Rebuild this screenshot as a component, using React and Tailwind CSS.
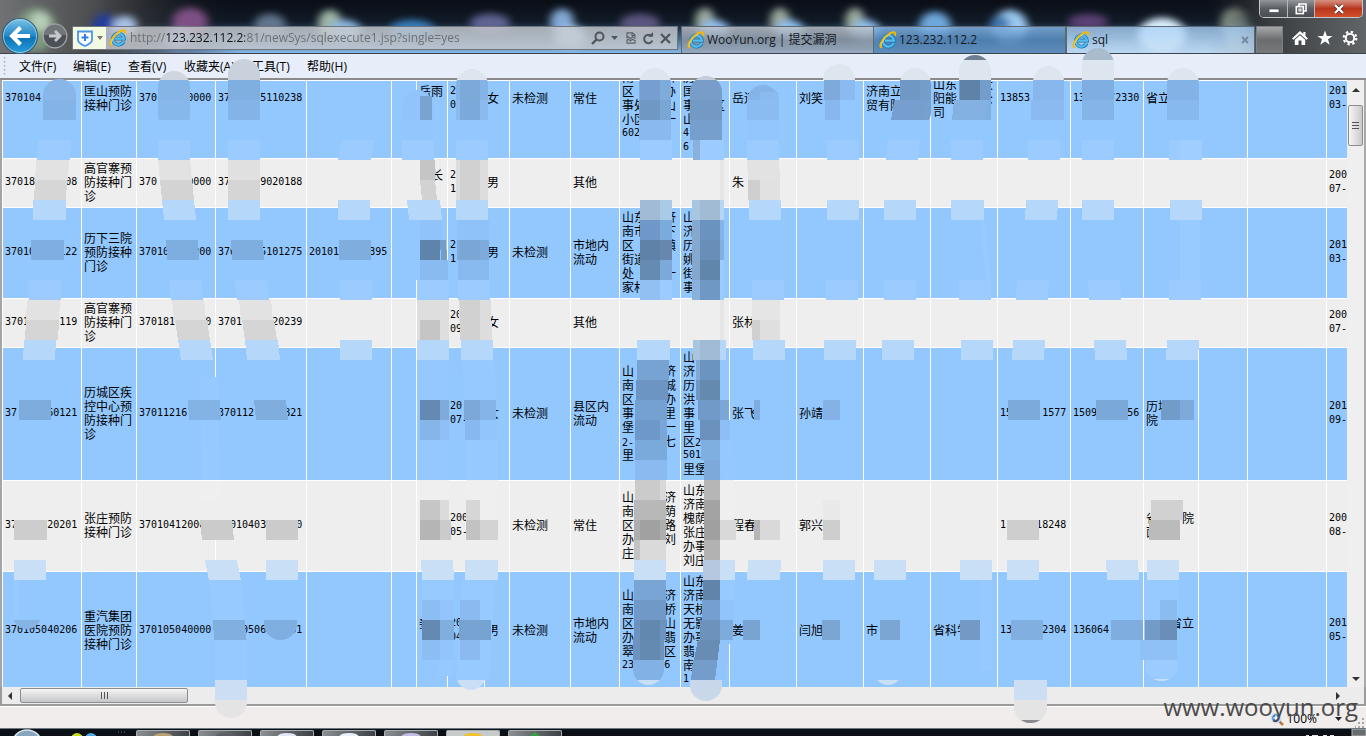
import React from 'react';

const COLS = [
  'w-[79px]', 'w-[55px]', 'w-[79px]', 'w-[91px]', 'w-[85px]', 'w-[25px]', 'w-[31px]', 'w-[37px]',
  'w-[25px]', 'w-[61px]', 'w-[49px]', 'w-[61px]', 'w-[49px]', 'w-[67px]', 'w-[67px]', 'w-[67px]',
  'w-[67px]', 'w-[73px]', 'w-[73px]', 'w-[55px]', 'w-[49px]', 'w-[79px]', 'w-[79px]',
];

// One entry per column; "|" separates the lines of a cell.
const ROWS = [
  ['370104', '匡山预防|接种门诊', '370     0000', '37     5110238', '', '', '岳雨|　', '2|0', '女', '未检测', '常住',
    '　|南　　 济|区　　 办|事处　 山|小区　 一|602', '　|　|历|国|事　 区|山|4|6', '岳连', '刘笑', '济南立|贸有限', '山东　　大|阳能　　公|司', '13853', '13    72330', '省立', '', '', '201|03-'],
  ['37018     08', '高官寨预|防接种门|诊', '370     0000', '37     9020188', '', '', '　长|　', '2|1', '男', '', '其他',
    '', '', '朱', '', '', '', '', '', '', '', '', '200|07-'],
  ['37010    122', '历下三院|预防接种|门诊', '37010    200', '370    5101275', '20101     395', '', '', '2|1', '男', '未检测', '市地内|流动',
    '山东　 济|南市　 下|区　　 镇|街道|处　　 一|家村', '山|济|历|姚|街|事', '', '', '', '', '', '', '', '', '', '201|03-'],
  ['3701     119', '高官寨预|防接种门|诊', '370181     0', '3701     20239', '', '', '', '20|09', '女', '', '其他',
    '', '', '张林', '', '', '', '', '', '', '', '', '200|07-'],
  ['37     60121', '历城区疾|控中心预|防接种门|诊', '37011216', '370112     821', '', '', '', '20|07-', '女', '未检测', '县区内|流动',
    '山　　 济|南　　 城|区　　 办|事　　 里|堡　　 一|2-　　 七|里', '山|济|历|洪|事|里|区2|501|里堡', '张飞', '孙靖', '', '', '15     1577', '1509     56', '历城|院', '', '', '201|09-'],
  ['37     20201', '张庄预防|接种门诊', '37010412000', '  010403     0', '', '', '', '200|05-', '', '未检测', '常住',
    '山　　 济|南　　 荫|区　　 路|办　　 刘|庄', '山东|济南|槐荫|张庄|办事|刘庄', '程春', '郭兴', '', '', '1     18248', '', '省　　院|面', '', '', '200|08-'],
  ['370105040206', '重汽集团|医院预防|接种门诊', '370105040000', '    0506    51', '', '', '姜|　', '20|04', '男', '未检测', '市地内|流动',
    '山　　 济|南　　 桥|区　　 山|办　　 翡|翠　　 区|23     6', '山东|济南|天桥|无影|办事|翡|南|1', '姜', '闫旭', '市', '省科学', '13     2304', '136064', '　　省立|　', '', '', '201|05-'],
];

const L = '#9bcbff';
const M = '#b5d7fa';
const N = '#c8dff5';
const B = '#93c8ff';
const G = '#eeeeee';

// Strokes with rounded ends: box, then colour bands [y, height, colour].
const CAPS = [
  [[43, 79, 33, 60], [[79, 21, '#88b6e8'], [100, 20, '#84b3e7']]],
  [[158, 71, 32, 60], [[71, 9, '#d0d6dd'], [80, 20, '#85b4e6'], [100, 20, '#87b8ec']]],
  [[228, 59, 32, 80], [[59, 21, '#c9d2dc'], [80, 20, '#7fafe1'], [100, 20, '#84b4e7']]],
  [[402, 90, 31, 80], [[90, 50, '#90c4fb']]],
  [[456, 69, 32, 110], [[69, 11, '#dde5ee'], [80, 20, '#84b3e5'], [100, 20, '#8abaee'], [120, 20, '#94c7fd']]],
  [[639, 68, 32, 100], [[68, 12, '#dde5ee'], [80, 20, '#7dabdc'], [100, 20, '#7aa6d6'], [120, 20, '#8ab9ef']]],
  [[690, 76, 32, 90], [[76, 4, '#c5ced8'], [80, 20, '#779dc8'], [100, 20, '#739ac5'], [120, 20, '#769fcd']]],
  [[747, 85, 32, 80], [[85, 15, '#84b4e8'], [100, 20, '#8abcf1'], [120, 20, '#92c6fd']]],
  [[823, 64, 32, 60], [[64, 16, '#dde5ee']]],
  [[900, 68, 31, 60], [[68, 12, '#dde5ee'], [80, 20, '#759dcc'], [100, 20, '#799fce']]],
  [[959, 55, 32, 80], [[55, 5, '#6e7f92'], [60, 20, '#dde5ee'], [80, 20, '#759dcc'], [100, 20, '#80b0e0']]],
  [[1033, 66, 31, 70], [[66, 14, '#dde5ee'], [80, 20, '#87b7ec'], [100, 20, '#8abaf0']]],
  [[1082, 48, 32, 90], [[48, 12, '#a9bccb'], [60, 20, '#dde5ee'], [80, 20, '#7fafe2'], [100, 20, '#84b4e8']]],
  [[1167, 68, 32, 90], [[68, 12, '#dde5ee'], [80, 20, '#82b2e6'], [100, 20, '#88b9ee']]],
  [[12, 590, 30, 39], [[620, 9, '#85b3e3']]],
  [[215, 640, 32, 78], [[640, 40, B], [680, 20, '#cbdef4'], [700, 18, '#e4e4e4']]],
  [[264, 590, 33, 50], [[620, 20, '#7fafe0']]],
  [[456, 630, 30, 60], [[660, 20, B], [680, 10, N]]],
  [[633, 600, 31, 85], [[640, 20, '#6f98c6'], [660, 20, '#81b1e5'], [680, 5, N]]],
  [[690, 630, 32, 71], [[680, 21, '#c8d8ea']]],
  [[1014, 640, 33, 83], [[680, 20, '#cbdef4'], [700, 20, '#e4e4e4'], [720, 3, '#8a8a8e']]],
  [[1145, 600, 33, 81], [[660, 20, L], [679, 2, N]]],
  [[873, 630, 30, 55], [[680, 5, N]]],
];

// Blocks: [x, y, width, colour, height = 20, shift of the lower edge = 0]
const BLOCKS = [
  [38, 140, 33, L, 20, -1], [36, 160, 33, '#e2e2e2', 20, -1], [35, 180, 32, '#d6d6d6', 20, -1], [33, 200, 33, M],
  [31, 240, 33, '#7fafe2'], [29, 280, 32, L], [27, 300, 33, '#e2e2e2', 20, -1], [26, 320, 33, '#d5d5d5', 20, -1],
  [24, 340, 32, M, 20, -1], [19, 400, 32, '#7eacdd'], [14, 520, 33, '#cdcdcd'], [14, 560, 32, N], [14, 580, 5, '#97c9fc', 40, -1],

  [158, 120, 32, B], [158, 140, 32, L], [158, 160, 32, '#e2e2e2', 20, 2], [160, 180, 32, '#d3d3d3', 20, 2], [162, 200, 32, M, 20, 2],
  [166, 240, 32, '#7eaddf', 20, 1], [169, 280, 32, L, 20, 2], [172, 300, 32, '#e2e2e2', 20, 2], [175, 320, 32, '#d5d5d5', 20, 3],
  [178, 340, 32, M, 20, 3], [200, 377, 18, '#95c9ff', 103, 2], [188, 400, 32, '#83b2e5', 20, 1], [200, 481, 20, '#efefef'],
  [200, 500, 22, G], [200, 520, 32, '#cbcbcb', 20, 2], [205, 560, 32, N, 20, 4], [209, 580, 32, '#97cafe', 40, 4], [213, 620, 32, '#80afe0', 20, 1], [215, 640, 32, '#95c9ff', 40],

  [228, 120, 32, B], [228, 140, 32, L], [228, 160, 32, '#e0e0e0'], [228, 180, 32, '#d5d5d5'], [228, 200, 32, M], [231, 240, 32, '#7eaddf', 20, 1],
  [235, 280, 32, L, 20, 2], [239, 300, 32, '#e2e2e2', 20, 2], [242, 320, 32, '#d5d5d5', 20, 3], [245, 340, 33, M, 20, 2],
  [254, 400, 32, '#7faddd', 20, 2], [266, 520, 32, '#cbcbcb'], [266, 560, 32, N],

  [341, 140, 33, L, 20, -3], [338, 200, 32, M], [339, 240, 32, '#7fadde'], [340, 280, 32, L], [340, 340, 32, M],

  [402, 120, 32, '#92c6fd'], [420, 96, 12, '#79a3d0', 24], [402, 140, 32, L], [408, 160, 12, G, 40], [420, 160, 15, '#c5c5c5'], [420, 180, 15, '#d2d2d2', 20, 2],
  [407, 200, 33, M, 20, 2], [410, 220, 33, '#93c7ff', 60, 5], [420, 220, 22, '#90c3fa'], [420, 240, 20, '#5f84ab'], [440, 240, 6, '#759dca', 20, 1],
  [420, 260, 28, '#8abbf0'], [417, 280, 32, L], [417, 300, 32, '#dedede'], [417, 320, 32, '#dedede'], [420, 320, 20, '#c5c5c5'], [417, 340, 32, M],
  [417, 360, 32, '#94c8fe', 40], [420, 400, 20, '#6489b2'], [440, 400, 9, '#7eabd9'], [420, 420, 20, '#85b5e9'], [440, 420, 9, '#8ebff7'],
  [417, 440, 32, '#94c8fe', 40], [417, 480, 32, '#efefef'], [420, 500, 20, '#c6c6c6'], [440, 500, 9, '#dbdbdb'], [420, 520, 20, '#b5b5b5'], [440, 520, 11, '#cbcbcb'],
  [422, 540, 30, G], [421, 560, 32, N, 20, 1], [422, 580, 32, '#97cafe'], [422, 600, 18, '#8cbef4'], [440, 600, 14, '#91c5fb'],
  [422, 620, 18, '#6489b2'], [440, 620, 14, '#80aedd'], [422, 640, 18, '#8cbef4'], [440, 640, 14, '#91c5fb'], [440, 660, 14, '#96c9ff', 16, -3],

  [460, 80, 20, '#7da9d8'], [460, 100, 20, '#7ca9db'], [456, 140, 32, L], [456, 160, 32, '#dddddd', 40], [460, 160, 20, '#d1d1d1', 40],
  [456, 200, 32, M], [457, 220, 32, '#8fc2f8'], [457, 240, 32, '#7eabdc'], [460, 240, 20, '#7aa6d6'], [458, 260, 31, '#89baef'], [458, 280, 32, L],
  [459, 300, 32, '#dddddd', 40, 1], [460, 300, 20, '#d1d1d1', 40], [461, 340, 32, M], [462, 360, 32, '#95c9ff', 40, 3], [464, 400, 32, '#85b4e8'], [464, 400, 16, '#7ba8d9'],
  [465, 420, 32, '#91c5fc'], [465, 420, 15, '#87b8ef'], [466, 440, 32, '#95c9ff', 40], [466, 480, 32, '#efefef', 40], [466, 500, 14, '#d6d6d6'],
  [466, 520, 14, '#c2c2c2'], [480, 520, 18, '#d3d3d3'], [466, 540, 32, G], [465, 560, 33, N], [462, 580, 33, '#97cafe', 100, -6], [460, 600, 20, '#8abaf0'],
  [459, 620, 32, '#76a3d2'], [460, 640, 20, '#8abaf0'],

  [640, 80, 20, '#769fcf'], [640, 100, 20, '#7098c5'], [640, 140, 32, L], [640, 200, 20, '#a1bad5'], [660, 200, 12, '#aacbe8'],
  [640, 220, 20, '#6f98c8'], [660, 220, 12, '#7baadd'], [640, 240, 20, '#5f82a8'], [660, 240, 12, '#6787ae'], [640, 260, 20, '#668bb3'], [660, 260, 12, '#7ba9da'],
  [640, 280, 20, '#93c0f2'], [660, 280, 12, L], [637, 340, 33, M], [637, 360, 32, '#77a3d2'], [636, 380, 32, '#6d95c3'], [635, 400, 32, '#74a1d2'],
  [635, 420, 25, '#6e98c7'], [660, 420, 7, '#79a7d9'], [635, 440, 32, '#7aaadb'], [635, 460, 32, '#8abaf0'], [635, 480, 25, '#cbcbcb'], [660, 480, 6, '#d8d8d8'],
  [634, 500, 32, '#b8b8b8'], [634, 520, 32, '#aeaeae'], [640, 520, 20, '#a1a1a1'], [634, 540, 32, '#dadada'], [634, 540, 6, '#c3c3c3'], [634, 560, 32, N],
  [634, 580, 32, '#79a5d4'], [634, 600, 32, '#7199c8'], [634, 620, 32, '#6c92bd'], [640, 620, 20, '#6388b0'], [633, 640, 31, '#6d93be'], [640, 640, 20, '#658ab2'],

  [693, 140, 7, '#8ab0dc'], [700, 140, 24, L], [692, 200, 8, '#a9c6e1'], [700, 200, 20, '#a2bbd4'], [720, 200, 4, '#b4d5f3'],
  [692, 220, 8, '#85a8cf'], [700, 220, 20, '#6b93c0'], [720, 220, 4, '#85b5e8'], [692, 240, 8, '#85a8cf'], [700, 240, 20, '#698fb9'], [720, 240, 4, '#83aee0'],
  [692, 260, 8, '#83a7cd'], [700, 260, 20, '#6086ac'], [720, 260, 4, '#9bcbff'], [692, 280, 8, '#8ab0dc'], [700, 280, 20, '#7098c4'], [720, 280, 4, L],
  [720, 160, 4, '#e6e6e6', 40], [720, 300, 4, '#e6e6e6', 40], [693, 340, 7, '#a9c6e1'], [700, 340, 20, '#a2bbd4'], [720, 340, 6, M],
  [696, 360, 4, '#83a9d5'], [700, 360, 20, '#6c94c0'], [696, 380, 4, '#7198c4'], [700, 380, 20, '#658aaf'], [698, 400, 22, '#729ac9'], [720, 400, 9, '#7aa7d7'],
  [720, 420, 10, '#8dbff6'], [700, 420, 20, '#6b91bd'], [701, 440, 19, '#7fafe0'], [704, 460, 16, '#7ca9da'], [720, 440, 12, '#94c8ff', 40, 3],
  [704, 480, 16, '#b6b6b6'], [704, 500, 16, '#a3a3a3'], [704, 520, 16, '#a0a0a0'], [720, 480, 14, '#efefef', 40], [720, 520, 16, '#d9d9d9'], [704, 540, 16, '#b2b2b2'], [720, 540, 15, G],
  [703, 560, 17, '#b5c8e0'], [720, 560, 15, N], [703, 580, 17, '#6084aa'], [720, 580, 15, '#97cafe'], [702, 600, 18, '#759fcf'], [720, 600, 14, '#90c4fb'],
  [700, 620, 20, '#6d93bc'], [720, 620, 13, '#7dacdc'], [698, 640, 22, '#678db4', 20, -4], [698, 640, 22, '#678db4'], [693, 660, 27, '#749dcc', 20, -2], [693, 660, 27, '#749dcc'], [720, 640, 10, '#91c4fb', 40, -5],

  [760, 92, 18, '#8abbf0', 8], [747, 140, 32, L], [747, 160, 32, '#e2e2e2', 20, 1], [748, 180, 12, '#cfcfcf'], [760, 180, 20, '#e1e1e1'], [749, 200, 32, M],
  [752, 280, 32, L], [752, 300, 28, '#e5e5e5'], [752, 320, 8, '#d0d0d0'], [760, 320, 20, '#dfdfdf'], [753, 340, 32, M], [754, 400, 6, '#7eacdf'],
  [754, 520, 6, '#b5b5b5'], [760, 520, 20, '#d9d9d9'], [748, 560, 33, N, 20, -1], [743, 620, 17, '#79a4d2'],

  [824, 80, 16, '#7eaadb'], [840, 80, 15, '#8abaf0'], [825, 100, 15, '#87b7ec'], [827, 140, 32, L], [827, 200, 32, M], [826, 280, 32, L], [824, 340, 32, M],
  [823, 400, 17, '#84b2e7'], [823, 500, 17, '#e9e9e9'], [823, 520, 17, '#cecece'], [823, 560, 32, N], [822, 620, 18, '#7ba6d4'],

  [895, 100, 32, '#769fd0', 20, -4], [900, 80, 20, '#7098c5'], [888, 140, 32, L, 20, -2], [884, 200, 32, M], [884, 280, 32, L], [882, 340, 32, M], [874, 560, 32, N], [880, 620, 20, '#7ba6d4'],
  [960, 80, 20, '#5f82a8'], [954, 100, 33, '#83b1e2', 20, -2], [951, 140, 32, L], [951, 200, 33, M], [980, 220, 5, '#97caff', 60, 6], [959, 280, 32, L], [961, 340, 32, M],
  [960, 560, 32, N], [960, 620, 20, '#739ac5'], [980, 580, 12, '#96c9ff', 90],
  [1031, 100, 31, '#8abaf0'], [1028, 140, 32, L], [1026, 200, 32, M, 20, -1], [1017, 280, 32, L, 20, -1], [1013, 340, 32, M, 20, -1], [1008, 400, 32, '#7caada'], [1007, 520, 32, '#cecece'], [1007, 560, 32, N], [1011, 620, 32, '#80afe0'],
  [1082, 140, 32, L], [1082, 200, 32, M], [1088, 280, 32, L, 20, 1], [1094, 340, 32, M, 20, 1], [1096, 400, 32, '#7aa8d8'], [1106, 560, 32, N, 20, 1], [1111, 620, 32, '#7faddf'],
  [1169, 120, 32, B], [1169, 140, 32, L], [1180, 140, 22, '#a0ceff'], [1198, 160, 3, G, 40], [1170, 200, 32, M], [1180, 220, 20, '#98cbff', 60], [1169, 280, 32, L],
  [1198, 300, 3, G, 40], [1167, 340, 32, M, 20, -1], [1162, 400, 32, '#719bc9', 20, -1], [1180, 400, 14, '#7daada'], [1151, 500, 32, '#d1d1d1'], [1149, 520, 31, '#bbbbbb'],
  [1147, 560, 32, N], [1144, 580, 34, '#97cafe', 40], [1160, 600, 17, '#8bbcf0'], [1145, 620, 15, '#729bc8'], [1160, 620, 17, '#698fb9'], [1140, 640, 37, '#8fc1f6'],
];

function Cover() {
  return (
    <svg aria-hidden="true" shapeRendering="crispEdges" className="pointer-events-none absolute left-0 top-0 z-10 h-[736px] w-[1366px]" viewBox="0 0 1366 736">
      {CAPS.map(([[x, y, w, h], bands], i) => (
        <g key={i} clipPath={`url(#cap${i})`}>
          <clipPath id={`cap${i}`}><rect x={x} y={y} width={w} height={h} rx="16" /></clipPath>
          {bands.map(([by, bh, c]) => <rect key={by} x={x - 4} y={by} width={w + 8} height={bh} fill={c} />)}
        </g>
      ))}
      {BLOCKS.map(([x, y, w, c, h = 20, d = 0], i) => (
        <path key={i} d={`M${x} ${y}h${w}l${d} ${h}h${-w}z`} fill={c} />
      ))}
    </svg>
  );
}

function Line({ text }) {
  const parts = text.split(/([\x20-\x7e]+)/).filter(Boolean);
  const latin = /^[\x20-\x7e]+$/.test(text);
  return (
    <div className={`h-[14px] whitespace-pre ${latin ? "font-['DejaVu_Sans_Mono',monospace] text-[10px] leading-[13px]" : 'leading-[14px]'}`}>
      {latin ? text : parts.map((p, i) => /^[\x20-\x7e]/.test(p)
        ? <span key={i} className="font-['DejaVu_Sans_Mono',monospace] text-[10px]">{p}</span>
        : p)}
    </div>
  );
}

function IeIcon() {
  return (
    <svg viewBox="0 0 18 18" className="size-[18px] shrink-0" aria-hidden="true">
      <path d="M14.6 12.2A5.6 5.6 0 1 1 15 9.6H6" fill="none" stroke="#1b78b8" strokeWidth="3.6" />
      <path d="M14.6 12.2A5.6 5.6 0 1 1 15 9.6H6" fill="none" stroke="#55bdec" strokeWidth="2.2" />
      <path d="M2.2 16.3C-.6 14 5.2 5.2 11.5 2.2c4-1.9 5.3-.7 4.6 1.8" fill="none" stroke="#f5b800" strokeWidth="1.9" strokeLinecap="round" />
      <path d="M2.5 15.2C1.4 12.6 6 6 11.6 3" fill="none" stroke="#ffe36a" strokeWidth=".6" />
    </svg>
  );
}

const GLOWS = [
  [36, 30, 20, 22, '#7f9a80'], [40, 22, 10, 10, '#b8cfb8'], [105, 28, 13, 14, '#243c9c'], [125, 26, 12, 10, '#a9c2e6'], [190, 22, 18, 14, '#7d4f84'],
  [178, 40, 14, 10, '#7f93c4'], [270, 26, 16, 12, '#60758c'], [330, 24, 12, 14, '#9fb6a6'], [345, 32, 16, 12, '#8cb8e2'], [412, 30, 22, 10, '#397fbb'],
  [490, 24, 20, 10, '#5e6493'], [562, 22, 12, 13, '#82a8d4'], [570, 38, 16, 12, '#9dc7ec'], [640, 24, 20, 10, '#5b557f'], [705, 22, 10, 14, '#9aa99c'],
  [715, 32, 14, 12, '#8fc0ee'], [780, 22, 10, 14, '#9aa99c'], [790, 32, 14, 12, '#8fc0ee'], [855, 22, 10, 14, '#9aa99c'], [866, 32, 14, 12, '#8fc0ee'],
  [935, 26, 16, 14, '#6ea7dc'], [1010, 28, 18, 18, '#9ccaf2'], [1000, 24, 10, 8, '#3e76ad'], [1088, 22, 20, 8, '#5b4173'], [1162, 36, 24, 18, '#dcf0ff'], [1235, 24, 14, 16, '#a3b3a0'], [1242, 40, 16, 16, '#badbf2'],
];

function Glass() {
  return (
    <svg aria-hidden="true" className="absolute inset-0 h-full w-full" viewBox="0 0 1366 54" preserveAspectRatio="none">
      <defs>
        <linearGradient id="sky" x1="0" y1="0" x2="0" y2="1">
          <stop offset="0" stopColor="#0a0e16" /><stop offset=".4" stopColor="#101a26" /><stop offset=".7" stopColor="#3c6186" /><stop offset="1" stopColor="#86b6e8" />
        </linearGradient>
        <linearGradient id="left" x1="0" x2="1"><stop offset="0" stopColor="#707274" /><stop offset=".4" stopColor="#4b4c4e" /><stop offset="1" stopColor="#10141c" stopOpacity="0" /></linearGradient>
        <linearGradient id="right" x1="0" x2="1"><stop offset="0" stopColor="#22262c" stopOpacity="0" /><stop offset=".4" stopColor="#3a3d40" /><stop offset="1" stopColor="#626568" /></linearGradient>
        <filter id="soft" x="-40%" y="-40%" width="180%" height="180%"><feGaussianBlur stdDeviation="4" /></filter>
      </defs>
      <rect width="1366" height="54" fill="url(#sky)" />
      <rect width="240" height="54" fill="url(#left)" />
      <g filter="url(#soft)">{GLOWS.map(([x, y, rx, ry, c], i) => <ellipse key={i} cx={x} cy={y} rx={rx} ry={ry} fill={c} />)}</g>
      <rect x="1206" width="160" height="54" fill="url(#right)" />
    </svg>
  );
}

function Tab({ label, close, className }) {
  return (
    <button type="button" role="tab" aria-selected={!!close} className={`flex h-[27px] items-center gap-[2px] border border-b-0 border-[#5d6873] px-[5px] font-['Open_Sans','Noto_Sans_CJK_SC',sans-serif] text-[12px] text-[#15191e] ${className}`}>
      <IeIcon />
      <span>{label}</span>
      {close && <svg viewBox="0 0 8 8" className="ml-auto size-2" aria-hidden="true"><path d="M1 1l6 6M7 1L1 7" stroke="#71899f" strokeWidth="1.8" /></svg>}
    </button>
  );
}

const iconBtn = 'flex items-center justify-center';
const MENUS = [['文件(F)', 'w-[54px]'], ['编辑(E)', 'w-[55px]'], ['查看(V)', 'w-[56px]'], ['收藏夹(A)', 'w-[68px]'], ['工具(T)', 'w-[55px]'], ['帮助(H)', 'w-[55px]']];

export default function App() {
  return (
    <div className="relative flex h-screen flex-col overflow-hidden bg-[#eeeeee] font-['Noto_Sans_CJK_SC',sans-serif] text-[12px] text-black">
      <header className="relative h-[54px] shrink-0 border-b border-[#3c444e]">
        <Glass />
        <div className="absolute right-[3px] top-0 z-10 flex h-[18px] w-[104px] overflow-hidden rounded-b-[5px] border border-t-0 border-[#c4c6c8]">
          <button type="button" aria-label="最小化" className={`${iconBtn} w-[28px] border-r border-[#b6b8ba] bg-linear-to-b from-[#93979b] via-[#5b5f63] to-[#494d51]`}>
            <svg viewBox="0 0 12 12" className="size-3"><rect x="1" y="6" width="10" height="3.5" fill="#fff" stroke="#3d4550" strokeWidth=".7" /></svg>
          </button>
          <button type="button" aria-label="还原" className={`${iconBtn} w-[27px] border-r border-[#b6b8ba] bg-linear-to-b from-[#93979b] via-[#5b5f63] to-[#494d51]`}>
            <svg viewBox="0 0 12 12" className="size-3" fill="none" stroke="#fff" strokeWidth="1.6"><path d="M4 3V1h7v7H9" /><rect x="1.3" y="3.6" width="7" height="7" /><rect x="4" y="6" width="2" height="2" strokeWidth="1" /></svg>
          </button>
          <button type="button" aria-label="关闭" className={`${iconBtn} flex-1 bg-linear-to-b from-[#d69080] via-[#b8351c] to-[#d4502c]`}>
            <svg viewBox="0 0 12 12" className="size-3"><path d="M2 2l8 8M10 2l-8 8" stroke="#4b2822" strokeWidth="3.8" /><path d="M2 2l8 8M10 2l-8 8" stroke="#fff" strokeWidth="2.4" /></svg>
          </button>
        </div>
        <div className="relative flex h-full items-end">
          <div className="flex h-[34px] w-[72px] shrink-0 items-center gap-[3px] pl-[1px]">
            <button type="button" aria-label="后退">
              <svg viewBox="0 0 38 38" className="size-[38px]">
                <defs><linearGradient id="bk" x1="0" y1="0" x2="0" y2="1"><stop offset="0" stopColor="#7fc4e8" /><stop offset=".5" stopColor="#1f86c6" /><stop offset=".55" stopColor="#0b74b8" /><stop offset="1" stopColor="#2a9ddb" /></linearGradient></defs>
                <circle cx="19" cy="19" r="17.5" fill="url(#bk)" stroke="#3a5c74" strokeWidth="1.2" /><circle cx="19" cy="19" r="16.5" fill="none" stroke="#a5d8ef" strokeWidth=".8" />
                <path d="M29 19H11M19.500 10.500L11 19l8.500 8.500" fill="none" stroke="#fff" strokeWidth="4" />
              </svg>
            </button>
            <button type="button" aria-label="前进">
              <svg viewBox="0 0 26 26" className="size-[26px]">
                <circle cx="13" cy="13" r="11.800" fill="#4b5156" stroke="#a7abae" strokeWidth="1.200" /><path d="M2 12a11 11 0 0 1 22 0z" fill="#8a9094" opacity=".6" />
                <path d="M7 13h11M13 8l5 5-5 5" fill="none" stroke="#c7cacc" strokeWidth="2.800" />
              </svg>
            </button>
          </div>
          <div className="mb-[3px] flex h-[24px] w-[606px] shrink-0 items-center border border-[#6f757c] bg-[#c9ccd0]/80">
            <button type="button" aria-label="安全" className="flex h-full w-[33px] shrink-0 items-center justify-center gap-[3px] bg-[#f2fae2]">
              <svg viewBox="0 0 18 18" className="size-[18px]"><path d="M2 2.500h14v8.500c0 3-3.500 4.500-7 6-3.500-1.500-7-3-7-6z" fill="#fff" stroke="#4a95ea" strokeWidth="1.800" /><path d="M9 5v7M5.500 8.500h7" stroke="#2f80e0" strokeWidth="2" /></svg>
              <svg viewBox="0 0 6 4" className="h-1 w-[6px]"><path d="M0 0h6L3 4z" fill="#777" /></svg>
            </button>
            <span className="ml-[3px] mr-[3px]"><IeIcon /></span>
            <input aria-label="地址" defaultValue="http://123.232.112.2:81/newSys/sqlexecute1.jsp?single=yes" className="min-w-0 flex-1 bg-[linear-gradient(90deg,#6b6e72_37px,#101214_37px,#101214_115px,#6b6e72_115px)] bg-clip-text font-['Open_Sans',sans-serif] text-[12px] text-transparent outline-none" />
            <div className="flex items-center gap-[6px] pr-[6px]">
              <button type="button" aria-label="搜索"><svg viewBox="0 0 14 14" className="size-[14px]" fill="none" stroke="#50565c"><circle cx="8.500" cy="5.500" r="4" strokeWidth="2" /><path d="M5.500 8.500L1 13" strokeWidth="2.400" /></svg></button>
              <svg viewBox="0 0 7 4" className="h-1 w-[7px]" aria-hidden="true"><path d="M0 0h7L3.500 4z" fill="#50565c" /></svg>
              <button type="button" aria-label="兼容性视图" className="ml-[2px]"><svg viewBox="0 0 10 12" className="h-3 w-[10px]" fill="none" stroke="#5d6369" strokeWidth="1.200"><path d="M1 5V.8h5.500L9 3v2M6 .8V3.500h3M1 8v3.200h8V8M.5 6.200l2-1.400 2 1.800 2-1.800 3 1.800M.5 8.600l2-1.400 2 1.800 2-1.800 3 1.800" /></svg></button>
              <button type="button" aria-label="刷新"><svg viewBox="0 0 12 13" className="h-[13px] w-3"><path d="M9.500 4.200A4.200 4.200 0 1 0 10.300 8.500" fill="none" stroke="#50565c" strokeWidth="2" /><path d="M6 4.800h5V0z" fill="#50565c" /></svg></button>
              <button type="button" aria-label="停止"><svg viewBox="0 0 11 11" className="size-[11px]"><path d="M1 1l9 9M10 1l-9 9" stroke="#50565c" strokeWidth="2.200" /></svg></button>
            </div>
          </div>
          <div role="tablist" className="ml-[3px] flex items-end">
            <Tab label="WooYun.org | 提交漏洞" className="w-[193px] bg-linear-to-b from-[#c0c5cc]/80 via-[#8d949e]/80 to-[#9aa5b3]/80" />
            <Tab label="123.232.112.2" className="w-[192px] border-l-0 bg-linear-to-b from-[#87b8e8]/80 via-[#4f82b3]/80 to-[#5583b0]/80" />
            <Tab label="sql" close className="w-[189px] bg-linear-to-b from-[#a7cff5]/75 to-[#c8e0f4]/80" />
            <button type="button" aria-label="新建选项卡" className="ml-[1px] h-[27px] w-[27px] border border-b-0 border-[#7b7f83] bg-linear-to-b from-[#a6a8aa] via-[#6a6c6e] to-[#77797b]" />
          </div>
          <div className="ml-auto flex items-center gap-[9px] pb-[7px] pr-[8px]">
            <button type="button" aria-label="主页"><svg viewBox="0 0 16 16" className="size-4" fill="#fff"><path d="M8 1L0 8.500l1.500 1.200L8 4l6.500 5.700L16 8.500l-2.500-2.400V2h-2.200v2z" /><path d="M8 5.300L2.800 9.800V15h3.700v-4.500h3V15h3.700V9.800z" /></svg></button>
            <button type="button" aria-label="收藏夹"><svg viewBox="0 0 16 16" className="size-4" fill="#fff"><path d="M8 .5l1.900 5.400h5.700l-4.600 3.400 1.700 5.500L8 11.500l-4.700 3.300L5 9.300.4 5.900h5.700z" /></svg></button>
            <button type="button" aria-label="工具"><svg viewBox="0 0 16 16" className="size-4" fill="none" stroke="#fff"><circle cx="8" cy="8" r="4.200" strokeWidth="2" /><circle cx="8" cy="8" r="6.300" strokeWidth="2.200" strokeDasharray="2.350 2.600" /></svg></button>
          </div>
        </div>
      </header>

      <nav className="flex h-[26px] shrink-0 items-center border-b-2 border-[#8b8b8b] bg-[#e7eefa]">
        <svg viewBox="0 0 3 20" className="ml-[3px] mr-[13px] h-5 w-[3px]" aria-hidden="true"><path d="M1.500 1v18" stroke="#a5abb5" strokeWidth="1.500" strokeDasharray="1.500 2.500" /></svg>
        {MENUS.map(([t, w]) => <button key={t} type="button" className={`${w} shrink-0 whitespace-nowrap pt-[2px] text-left font-['Open_Sans','Noto_Sans_CJK_SC',sans-serif] leading-[20px]`}>{t}</button>)}
      </nav>

      <main className="flex min-h-0 flex-1 border-l-2 border-[#a5a5a5]">
        <div className="min-w-0 flex-1 overflow-hidden border-l border-t border-white">
          <table className="mt-[-41px] w-[1403px] table-fixed border-separate border-spacing-0">
            <colgroup>{COLS.map((w, i) => <col key={i} className={w} />)}</colgroup>
            <tbody>
              {ROWS.map((row, r) => (
                <tr key={r} className={r % 2 ? 'bg-[#eeeeee]' : 'bg-[#93c8ff]'}>
                  {row.map((cell, c) => (
                    <td key={c} className="overflow-hidden border-b border-r border-white pb-[4px] pl-[2px] pt-[2px] align-middle">
                      {cell && cell.split('|').map((t, i) => <Line key={i} text={t} />)}
                    </td>
                  ))}
                </tr>
              ))}
            </tbody>
          </table>
        </div>
        <div className="flex w-[19px] shrink-0 flex-col items-center border-r-2 border-[#a9a9a9] bg-[#efefef] pt-[8px]">
          <svg viewBox="0 0 8 4" className="h-1 w-2 shrink-0" aria-hidden="true"><path d="M4 0l4 4H0z" fill="#333" /></svg>
          <div className="mt-[13px] flex h-[41px] w-[15px] shrink-0 flex-col items-center justify-center gap-[2px] rounded-[2px] border border-[#8d8d8d] bg-linear-to-r from-[#f5f5f5] to-[#c9cacd]">
            <i className="h-px w-[7px] bg-[#555]" /><i className="h-px w-[7px] bg-[#555]" /><i className="h-px w-[7px] bg-[#555]" />
          </div>
          <svg viewBox="0 0 8 4" className="mb-[6px] mt-auto h-1 w-2 shrink-0" aria-hidden="true"><path d="M4 4l4-4H0z" fill="#333" /></svg>
        </div>
      </main>

      <div className="flex h-[19px] shrink-0 items-center border-b-2 border-l-2 border-r-2 border-[#9b9b9b] bg-[#ececec] pl-[6px] pr-[24px]">
        <svg viewBox="0 0 4 8" className="h-2 w-1" aria-hidden="true"><path d="M0 4l4-4v8z" fill="#333" /></svg>
        <div className="ml-[8px] flex h-[15px] w-[168px] items-center justify-center gap-[2px] rounded-[2px] border border-[#8d8d8d] bg-linear-to-b from-[#f5f5f5] to-[#c4c6c9]">
          <i className="h-[7px] w-px bg-[#555]" /><i className="h-[7px] w-px bg-[#555]" /><i className="h-[7px] w-px bg-[#555]" />
        </div>
        <svg viewBox="0 0 4 8" className="ml-auto h-2 w-1" aria-hidden="true"><path d="M4 4L0 0v8z" fill="#333" /></svg>
      </div>

      <footer className="flex h-[22px] shrink-0 items-center justify-end border-t border-white bg-[#f0edec] pr-[1px] pt-[2px]">
        <svg viewBox="0 0 14 14" className="mr-[2px] size-[14px]" aria-hidden="true"><path d="M8 8l5 5" stroke="#b47b42" strokeWidth="2.500" /><circle cx="6" cy="6" r="4.500" fill="#3c83d0" stroke="#c9dcee" strokeWidth="1.500" /><path d="M6 3.500v5M3.500 6h5" stroke="#fff" strokeWidth="1.500" /></svg>
        <button type="button" className="flex items-center gap-[18px] font-['Open_Sans',sans-serif] text-[12px] leading-[16px]">100%
          <svg viewBox="0 0 7 4" className="h-1 w-[7px]" aria-hidden="true"><path d="M0 0h7L3.500 4z" fill="#222" /></svg>
        </button>
        <svg viewBox="0 0 10 10" className="ml-[13px] mt-[8px] size-[10px]" aria-hidden="true" fill="#a8a8a8"><path d="M7 0h2v2H7zM7 4h2v2H7zM3 4h2v2H3zM7 8h2v2H7zM3 8h2v2H3zM0 8h1v2H0z" /></svg>
      </footer>

      <div className="flex h-[8px] shrink-0 overflow-hidden border-t border-[#6c7881] bg-[#0a1016]">
        <svg viewBox="0 0 136 7" className="h-[7px] w-[136px] shrink-0" aria-hidden="true"><circle cx="27" cy="16" r="15" fill="#88a5bd" stroke="#d7e6ef" strokeWidth="1.500" /><circle cx="77" cy="10" r="6" fill="#c9dc1c" /><circle cx="91" cy="10" r="6" fill="#4aa8e4" /><path d="M118 3h8" stroke="#6c7881" strokeDasharray="1 2" /></svg>
        <div className="flex gap-[8px] pt-px">
          {['#b9a272', '#5c6064', '#e3e7f8', '#e8f2fc', '#c4bde6', '#f0c12c', '#31a53c'].map((c, i) => (
            <span key={i} className={`flex h-[7px] w-[54px] justify-center rounded-t-[2px] border border-b-0 border-[#a9adb0] ${i === 5 ? 'bg-[#c6cacb]' : 'bg-linear-to-r from-[#8b8f92] to-[#3d4246]'}`}>
              <svg viewBox="0 0 24 5" className="mt-px h-[5px] w-6" aria-hidden="true"><path d={i === 6 ? 'M6 5l6-5 6 5z' : 'M2 5Q3 1 12 1t10 4z'} fill={c} /></svg>
            </span>
          ))}
        </div>
        <svg viewBox="0 0 60 7" className="ml-auto h-[7px] w-[60px]" aria-hidden="true"><path d="M0 6.500h3M6 6.500h6M17 6.500h4M24 6.500h4" stroke="#e5e8ea" strokeWidth="1" /><rect x="46" width="14" height="7" fill="#686d70" stroke="#b1b6b9" /></svg>
      </div>

      <Cover />
      <div className="absolute bottom-[11px] right-[8px] z-20 font-['Open_Sans',sans-serif] text-[24px] leading-[36px] text-[#4a4a4a]">www.wooyun.org</div>
    </div>
  );
}
